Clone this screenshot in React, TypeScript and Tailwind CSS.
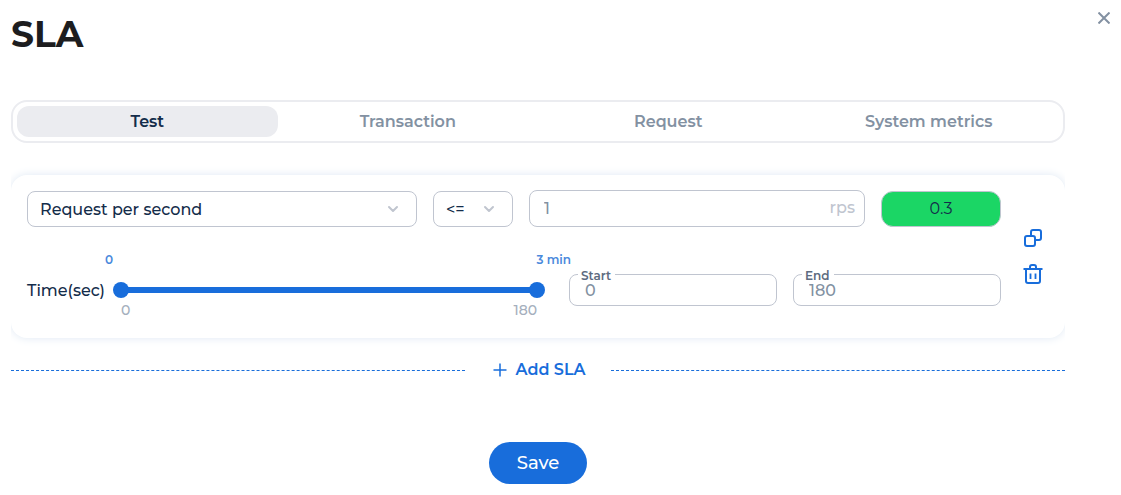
import { useState } from "react";
import clsx from "clsx";

const TABS = ["Test", "Transaction", "Request", "System metrics"];
const MAX_TIME = 180;

const selectClass =
  "block h-9 w-full appearance-none rounded-lg border border-[#c0c5d0] bg-white px-3 pt-0.5 text-base font-medium text-[#132c4a] outline-none";

const rangeClass =
  "pointer-events-none absolute inset-0 m-0 h-4 w-full appearance-none bg-transparent [&::-webkit-slider-thumb]:pointer-events-auto [&::-webkit-slider-thumb]:size-4 [&::-webkit-slider-thumb]:appearance-none [&::-webkit-slider-thumb]:rounded-full [&::-webkit-slider-thumb]:bg-[#186ddb]";

const ChevronIcon = () => (
  <svg
    viewBox="0 0 12 8"
    className="pointer-events-none absolute top-1/2 right-[18px] h-2 w-3 -translate-y-1/2"
    fill="none"
    stroke="#c0c5cf"
    strokeWidth="2"
    strokeLinecap="round"
    strokeLinejoin="round"
  >
    <path d="M2 2l4 4 4-4" />
  </svg>
);

const CopyIcon = () => (
  <svg
    viewBox="0 0 20 20"
    className="size-5"
    fill="none"
    stroke="currentColor"
    strokeWidth="2"
  >
    <rect x="2" y="8" width="10" height="10" rx="2" />
    <path d="M8 8V4a2 2 0 0 1 2-2h6a2 2 0 0 1 2 2v6a2 2 0 0 1-2 2h-4" />
  </svg>
);

const TrashIcon = () => (
  <svg
    viewBox="0 0 20 20"
    className="size-5"
    fill="none"
    stroke="currentColor"
    strokeWidth="2"
  >
    <path d="M0.500 5h19M3 5v12a2 2 0 0 0 2 2h10a2 2 0 0 0 2-2V5M7 5V3a2 2 0 0 1 2-2h2a2 2 0 0 1 2 2v2" />
    <path d="M7.500 9.500v5.500M12.500 9.500v5.500" strokeWidth="1.800" />
  </svg>
);

const TimeField = ({
  id,
  label,
  value,
  onChange,
}: {
  id: string;
  label: string;
  value: number;
  onChange: (value: number) => void;
}) => (
  <div className="relative w-[208px]">
    <label
      htmlFor={id}
      className="absolute -top-1.5 left-[9px] bg-white pr-1 pl-[3px] text-xs leading-4 font-semibold text-[#5d6b80]"
    >
      {label}
    </label>
    <input
      id={id}
      type="text"
      inputMode="numeric"
      value={value}
      onChange={(e) => onChange(Number(e.target.value) || 0)}
      className="block h-8 w-full rounded-lg border border-[#c0c5d0] px-[15px] text-base font-medium text-[#8391a2] outline-none"
    />
  </div>
);

const SlaCard = () => {
  const [metric, setMetric] = useState("rps");
  const [operator, setOperator] = useState("<=");
  const [limit, setLimit] = useState("1");
  const [start, setStart] = useState(0);
  const [end, setEnd] = useState(MAX_TIME);

  return (
    <section className="flex rounded-2xl bg-white pt-[15px] pb-2 pl-4 shadow-[0_0_10px_0_#dfe8f3]">
      <div className="min-w-0 flex-1">
        <div className="grid grid-cols-[390fr_80px_336fr_120px] items-end gap-4">
          <div className="relative">
            <select
              aria-label="Metric"
              value={metric}
              onChange={(e) => setMetric(e.target.value)}
              className={selectClass}
            >
              <option value="rps">Request per second</option>
              <option value="time">Response time</option>
            </select>
            <ChevronIcon />
          </div>
          <div className="relative">
            <select
              aria-label="Condition"
              value={operator}
              onChange={(e) => setOperator(e.target.value)}
              className={selectClass}
            >
              <option>{"<="}</option>
              <option>{">="}</option>
            </select>
            <ChevronIcon />
          </div>
          <div className="relative">
            <input
              id="limit"
              type="text"
              value={limit}
              onChange={(e) => setLimit(e.target.value)}
              className="block h-[37px] w-full rounded-lg border border-[#c0c5d0] pr-12 pl-3.5 text-base font-medium text-[#8391a2] outline-none"
            />
            <label
              htmlFor="limit"
              className="absolute top-1.5 right-2.5 text-base leading-6 font-medium text-[#c0c5cf]"
            >
              rps
            </label>
          </div>
          <output className="flex h-9 items-center justify-center rounded-xl border border-[#c0c5d0] bg-[#1bd665] text-base text-[#132c4a]">
            0.3
          </output>
        </div>

        <div className="mt-[25px] flex items-center">
          <span className="mr-2 text-base font-medium text-[#132c4a]">
            Time(sec)
          </span>
          <div className="mr-6 min-w-0 flex-1 pb-3">
            <div className="-mr-[26px] -ml-2 flex justify-between text-xs leading-4 font-semibold text-[#4a89dc]">
              <span>0</span>
              <span>3 min</span>
            </div>
            <div className="relative mt-3.5 h-4">
              <div className="px-2 pt-[5px]">
                <div className="h-1.5 bg-[#e4e8ee]">
                  <div
                    className="h-full bg-[#186ddb]"
                    style={{
                      marginLeft: `${(start / MAX_TIME) * 100}%`,
                      width: `${(Math.max(end - start, 0) / MAX_TIME) * 100}%`,
                    }}
                  />
                </div>
              </div>
              <input
                type="range"
                aria-label="Start time"
                max={MAX_TIME}
                value={start}
                onChange={(e) => setStart(Math.min(+e.target.value, end))}
                className={rangeClass}
              />
              <input
                type="range"
                aria-label="End time"
                max={MAX_TIME}
                value={end}
                onChange={(e) => setEnd(Math.max(+e.target.value, start))}
                className={rangeClass}
              />
            </div>
            <div className="mt-1 flex justify-between px-2 text-sm leading-4 font-medium text-[#a5afbd]">
              <span>0</span>
              <span>{MAX_TIME}</span>
            </div>
          </div>
          <div className="flex gap-4 pb-0.5">
            <TimeField id="start" label="Start" value={start} onChange={setStart} />
            <TimeField id="end" label="End" value={end} onChange={setEnd} />
          </div>
        </div>
      </div>

      <div className="-mt-2 flex w-16 flex-col items-center justify-center gap-4 text-[#186ddb]">
        <button type="button" aria-label="Copy SLA">
          <CopyIcon />
        </button>
        <button type="button" aria-label="Delete SLA">
          <TrashIcon />
        </button>
      </div>
    </section>
  );
};

const App = () => {
  const [activeTab, setActiveTab] = useState("Test");

  return (
    <div className="flex items-start bg-white font-['Montserrat','Inter',sans-serif]">
      <main className="min-w-0 flex-1 pt-3 pb-3 pl-[11px]">
        <h1 className="text-4xl leading-[44px] font-bold text-[#1d1d1f]">SLA</h1>

        <div
          role="tablist"
          className="mt-11 grid grid-cols-4 rounded-2xl border-2 border-[#ebecf0] p-1"
        >
          {TABS.map((tab) => (
            <button
              key={tab}
              type="button"
              role="tab"
              aria-selected={tab === activeTab}
              onClick={() => setActiveTab(tab)}
              className={clsx(
                "h-[31px] rounded-xl text-base font-semibold",
                tab === activeTab
                  ? "bg-[#ebecf0] text-[#132c4a]"
                  : "text-[#8391a2]",
              )}
            >
              {tab}
            </button>
          ))}
        </div>

        <div className="mt-8 overflow-x-clip">
          <SlaCard />
        </div>

        <div className="mt-5 flex items-center">
          <div className="flex-1 border-t border-dashed border-[#186ddb]" />
          <button
            type="button"
            className="mx-6 flex h-6 items-center gap-[9px] pr-0.5 pl-1 text-base font-semibold text-[#186ddb]"
          >
            <svg
              viewBox="0 0 14 14"
              className="size-3.5"
              stroke="currentColor"
              strokeWidth="1.500"
            >
              <path d="M7 0.500v13M0.500 7h13" />
            </svg>
            Add SLA
          </button>
          <div className="flex-1 border-t border-dashed border-[#186ddb]" />
        </div>

        <div className="mt-[60px] flex justify-center">
          <button
            type="button"
            className="h-[42px] w-[98px] rounded-full bg-[#186ddb] text-lg font-medium text-white"
          >
            Save
          </button>
        </div>
      </main>

      <button
        type="button"
        aria-label="Close"
        className="mt-2 mr-[7px] ml-[29px] flex size-5 items-center justify-center text-[#8391a2]"
      >
        <svg
          viewBox="0 0 12 12"
          className="size-3"
          stroke="currentColor"
          strokeWidth="2"
        >
          <path d="M0.500 0.500l11 11M11.500 0.500l-11 11" />
        </svg>
      </button>
    </div>
  );
};

export default App;
